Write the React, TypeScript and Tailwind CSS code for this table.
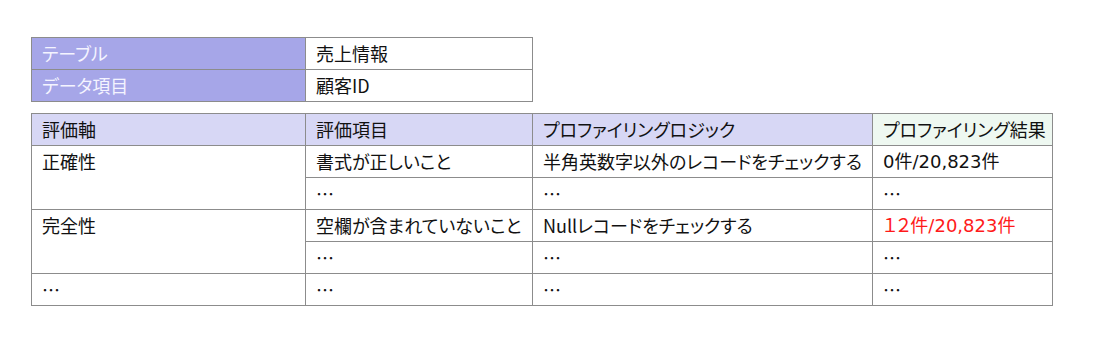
const font = { fontFamily: '"Noto Sans CJK JP", "Noto Sans", sans-serif', fontFeatureSettings: '"palt"' };

type Cell = { text: string; red?: boolean; num?: boolean; rowSpan?: number };

const rows: Cell[][] = [
  [{ text: '正確性', rowSpan: 2 }, { text: '書式が正しいこと' }, { text: '半角英数字以外のレコードをチェックする' }, { text: '0件/20,823件', num: true }],
  [{ text: '…' }, { text: '…' }, { text: '…' }],
  [{ text: '完全性', rowSpan: 2 }, { text: '空欄が含まれていないこと' }, { text: 'Nullレコードをチェックする' }, { text: '１２件/20,823件', red: true, num: true }],
  [{ text: '…' }, { text: '…' }, { text: '…' }],
  [{ text: '…' }, { text: '…' }, { text: '…' }, { text: '…' }],
];

const td = 'border border-[#8c8c8c] h-8 px-[10px] align-top leading-[31px] whitespace-nowrap';

export default function App() {
  return (
    <div className="min-h-[350px] w-[1110px] bg-white pt-[37px] pl-[31px] text-[18px] text-[#111]" style={font}>
      {/* Info table */}
      <table className="table-fixed border-collapse w-[501px]">
        <colgroup>
          <col className="w-[274px]" />
          <col className="w-[227px]" />
        </colgroup>
        <tbody>
          <tr>
            <td className={`${td} bg-[#a6a6e8] text-[#f4f4ff]`}>テーブル</td>
            <td className={td}>売上情報</td>
          </tr>
          <tr>
            <td className={`${td} bg-[#a6a6e8] text-[#f4f4ff]`}>データ項目</td>
            <td className={td}>顧客ID</td>
          </tr>
        </tbody>
      </table>

      {/* Profiling table */}
      <table className="table-fixed border-collapse w-[1021px] mt-[11px]">
        <colgroup>
          <col className="w-[274px]" />
          <col className="w-[227px]" />
          <col className="w-[340px]" />
          <col className="w-[180px]" />
        </colgroup>
        <thead>
          <tr className="text-left">
            <th className={`${td} font-normal bg-[#d7d7f5]`}>評価軸</th>
            <th className={`${td} font-normal bg-[#d7d7f5]`}>評価項目</th>
            <th className={`${td} font-normal bg-[#d7d7f5]`}>プロファイリングロジック</th>
            <th className={`${td} font-normal bg-[#eef8f1]`}>プロファイリング結果</th>
          </tr>
        </thead>
        <tbody>
          {rows.map((r, i) => (
            <tr key={i}>
              {r.map((c, j) => (
                <td
                  key={j}
                  rowSpan={c.rowSpan}
                  className={`${td} ${c.red ? 'text-[#ff1a1a]' : ''} ${c.num ? 'font-["DejaVu_Sans","Noto_Sans_CJK_JP",sans-serif]' : ''}`}
                >
                  {c.text}
                </td>
              ))}
            </tr>
          ))}
        </tbody>
      </table>
    </div>
  );
}
